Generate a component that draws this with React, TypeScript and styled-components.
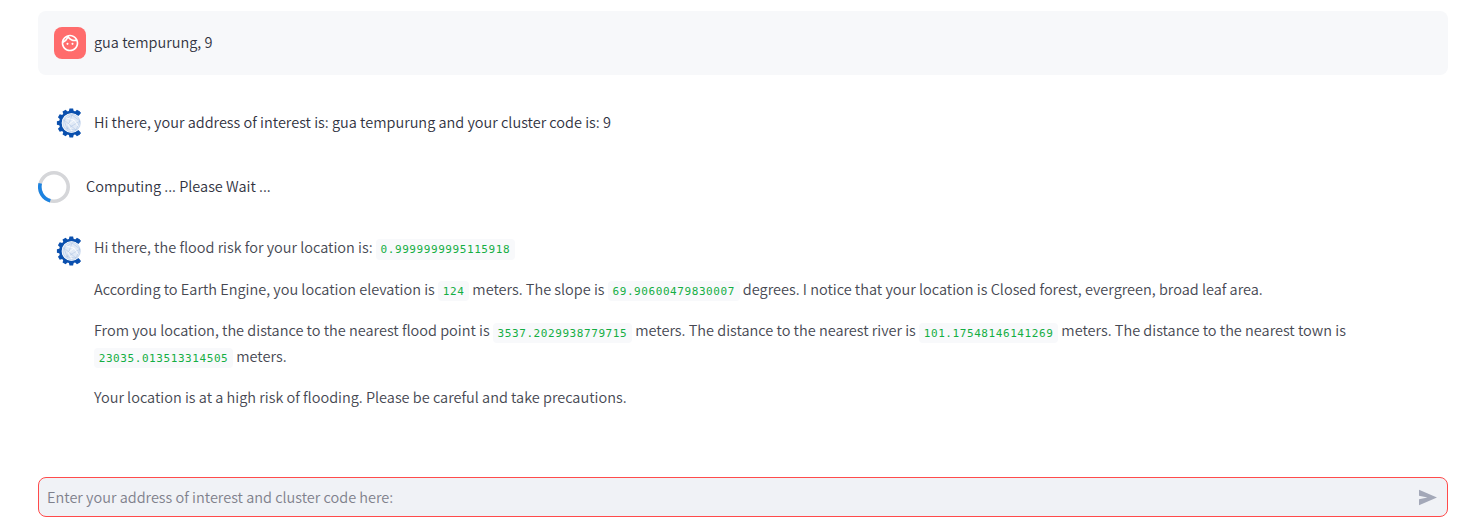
import React from "react";
import styled, { createGlobalStyle } from "styled-components";

const GlobalStyle = createGlobalStyle`
  * { box-sizing: border-box; }
  body {
    margin: 0;
    background: #fff;
    color: #31333f;
    font-family: "Noto Sans CJK SC", "Noto Sans", sans-serif;
    font-size: 14.5px;
    font-weight: 350;
    line-height: 25.6px;
    overflow: hidden;
  }
`;

const Page = styled.main`
  display: flex;
  flex-direction: column;
  height: 532px;
  padding: 11px 26px 15px 38px;
`;

const Message = styled.section<{ $user?: boolean }>`
  display: flex;
  align-items: flex-start;
  gap: 8px;
  padding: 16px;
  margin-bottom: 16px;
  border-radius: 8px;
  background: ${(p) => (p.$user ? "#f7f8fa" : "transparent")};
`;

const Avatar = styled.div<{ $color?: string }>`
  display: flex;
  flex: 0 0 32px;
  height: 32px;
  align-items: center;
  justify-content: center;
  border-radius: 8px;
  background: ${(p) => p.$color ?? "transparent"};
`;

const Body = styled.div<{ $faded?: boolean; $single?: boolean }>`
  flex: 1;
  display: flex;
  flex-direction: column;
  gap: 16px;
  margin-top: ${(p) => (p.$single ? "2px" : "-1px")};
  color: ${(p) => (p.$faded ? "#464852" : "#31333f")};
`;

const Paragraph = styled.p`
  margin: 0;
`;

const Code = styled.code`
  padding: 3.6px 4.7px;
  border-radius: 4px;
  background: #f8f9fb;
  color: #14ae43;
  font-family: "DejaVu Sans Mono", monospace;
  font-size: 11px;
  font-weight: 400;
  letter-spacing: 0.578px;
  line-height: 1;
`;

const Status = styled.div`
  display: flex;
  align-items: center;
  gap: 16px;
  height: 32px;
  margin-bottom: 16px;
`;

const StatusText = styled.span`
  padding-bottom: 2px;
`;

const InputBar = styled.div`
  display: flex;
  align-items: center;
  justify-content: space-between;
  height: 40px;
  margin-top: auto;
  padding: 0 9px 0 8px;
  border: 1px solid #ff4b4b;
  border-radius: 8px;
  background: #f0f2f6;
  color: #7f818c;
`;

const FaceIcon = () => (
  <svg width="20" height="20" viewBox="0 0 24 24" fill="#fff">
    <path d="M10.25 13a1.25 1.25 0 1 1-2.5 0 1.25 1.25 0 0 1 2.5 0zM15 11.75a1.25 1.25 0 1 0 0 2.5 1.25 1.25 0 0 0 0-2.5zM22 12c0 5.52-4.48 10-10 10S2 17.52 2 12 6.48 2 12 2s10 4.48 10 10zM10.66 4.12C12.06 6.44 14.6 8 17.5 8c.46 0 .91-.05 1.34-.12C17.44 5.56 14.9 4 12 4c-.46 0-.91.05-1.34.12zM4.42 9.47a8.046 8.046 0 0 0 3.66-4.44 8.046 8.046 0 0 0-3.66 4.44zM20 12c0-.78-.12-1.53-.33-2.24-.7.15-1.42.24-2.17.24a10 10 0 0 1-7.76-3.69A10.016 10.016 0 0 1 4 11.86c.01.04 0 .09 0 .14 0 4.41 3.59 8 8 8s8-3.59 8-8z" />
  </svg>
);

const teeth = [-150, -120, -90, -60, -30, 0, 30, -180, -210];

const GearIcon = () => (
  <svg width="32" height="32" viewBox="0 0 32 32">
    <g fill="#0b50ae">
      {teeth.map((a) => (
        <path
          key={a}
          d="M-2.6 -11 L-1.8 -14.4 H1.8 L2.6 -11Z"
          transform={`translate(17.3 16) rotate(${a})`}
        />
      ))}
      <path d="M26.7 6.6 L24.3 9 A9.8 9.8 0 1 0 24.3 23 L26.7 25.4 V27 L23 26.8 A12.2 12.2 0 1 1 23 5.2 L26.7 5Z" />
    </g>
    <circle cx="17.6" cy="16" r="9.2" fill="#e2eaf6" stroke="#fff" strokeWidth="0.6" />
    <g fill="none" stroke="#a9c0e3" strokeWidth="0.5">
      <circle cx="17.6" cy="16" r="8.7" />
      <path d="M10 13 18 8 26 14 22 23 13 22Z M10 13 22 23 M18 8 13 22 M26 14 13 22" />
    </g>
    <path d="M12 11 20 13 24 19 M20 13 14 18 18 24" fill="none" stroke="#fff" strokeWidth="0.8" />
  </svg>
);

const Spinner = () => (
  <svg width="32" height="32" viewBox="0 0 32 32" fill="none" strokeWidth="3.6">
    <circle cx="16" cy="16" r="14.2" stroke="#d5d6d9" />
    <path d="M2.25 12.4 A14.2 14.2 0 0 0 12.3 29.7" stroke="#1c83e1" />
  </svg>
);

const SendIcon = () => (
  <svg width="20" height="17" viewBox="0 0 20 17" fill="#a3a8b8">
    <path d="M1 .8 19 8.5 1 16.2V10.3L9.5 8.5 1 6.7Z" />
  </svg>
);

export default function App() {
  return (
    <>
      <GlobalStyle />
      <Page>
        <Message $user>
          <Avatar $color="#ff6c6c"><FaceIcon /></Avatar>
          <Body $single><Paragraph>gua tempurung, 9</Paragraph></Body>
        </Message>
        <Message>
          <Avatar><GearIcon /></Avatar>
          <Body $single>
            <Paragraph>Hi there, your address of interest is: gua tempurung and your cluster code is: 9</Paragraph>
          </Body>
        </Message>
        <Status><Spinner /><StatusText>Computing ... Please Wait ...</StatusText></Status>
        <Message>
          <Avatar><GearIcon /></Avatar>
          <Body $faded>
            <Paragraph>Hi there, the flood risk for your location is: <Code>0.9999999995115918</Code></Paragraph>
            <Paragraph>
              According to Earth Engine, you location elevation is <Code>124</Code> meters. The slope is{" "}
              <Code>69.90600479830007</Code> degrees. I notice that your location is Closed forest, evergreen, broad leaf area.
            </Paragraph>
            <Paragraph>
              From you location, the distance to the nearest flood point is <Code>3537.2029938779715</Code> meters. The
              distance to the nearest river is <Code>101.17548146141269</Code> meters. The distance to the nearest town is{" "}
              <Code>23035.013513314505</Code> meters.
            </Paragraph>
            <Paragraph>Your location is at a high risk of flooding. Please be careful and take precautions.</Paragraph>
          </Body>
        </Message>
        <InputBar>
          <span>Enter your address of interest and cluster code here:</span>
          <SendIcon />
        </InputBar>
      </Page>
    </>
  );
}
